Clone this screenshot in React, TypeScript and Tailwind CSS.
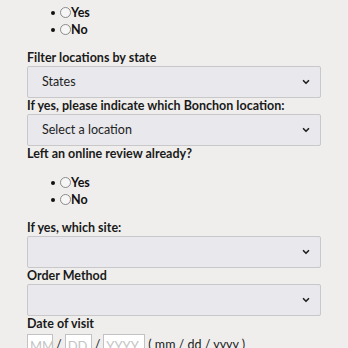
import { ChevronDown } from 'lucide-react';

function Radios() {
  return (
    <ul className="pl-[24px] text-[12.5px] font-bold leading-[17px] text-[#111]">
      {['Yes', 'No'].map((v) => (
        <li key={v} className="flex items-center h-[17px]">
          <span className="w-[4px] h-[4px] rounded-full bg-[#111] mr-[5px]" />
          <span className="w-[11px] h-[11px] rounded-full border border-[#8a8a8a] bg-[#f6f6f6]" />
          <span>{v}</span>
        </li>
      ))}
    </ul>
  );
}

function Select({ value }: { value?: string }) {
  return (
    <div className="h-[32px] w-[294px] flex items-center justify-between rounded-[2px] border border-[#c8c8cb] bg-[#e8e8ed] pl-[14px] pr-[9px] text-[12.5px] text-[#222]">
      <span>{value}</span>
      <ChevronDown className="w-[10px] h-[10px] text-[#222]" strokeWidth={4} />
    </div>
  );
}

function Label({ children }: { children: string }) {
  return <div className="h-[16px] text-[12.5px] font-bold leading-[16px] text-[#1a1a1a] whitespace-nowrap">{children}</div>;
}

export default function App() {
  return (
    <div className="h-[348px] overflow-hidden bg-[#efeeec] pl-[27px] pt-[4px]" style={{ fontFamily: 'Lato, "Open Sans", sans-serif' }}>
      <Radios />
      <div className="mt-[12px]"><Label>Filter locations by state</Label></div>
      <Select value="States" />
      <Label>If yes, please indicate which Bonchon location:</Label>
      <Select value="Select a location" />
      <Label>Left an online review already?</Label>
      <div className="mt-[12px]"><Radios /></div>
      <div className="mt-[12px]"><Label>If yes, which site:</Label></div>
      <Select />
      <Label>Order Method</Label>
      <Select />
      <div className="mb-[2px]"><Label>Date of visit</Label></div>
      <div className="flex items-center text-[12.5px] text-[#222]">
        <div className="w-[26px] h-[22px] border border-[#c2c2c4] bg-white text-[#c4c4c4] text-[13px] pl-[2px] leading-[22px]">MM</div>
        <span className="mx-[3px]">/</span>
        <div className="w-[27px] h-[22px] border border-[#c2c2c4] bg-white text-[#c4c4c4] text-[13px] pl-[2px] leading-[22px]">DD</div>
        <span className="mx-[3px]">/</span>
        <div className="w-[42px] h-[22px] border border-[#c2c2c4] bg-white text-[#c4c4c4] text-[13px] pl-[2px] leading-[22px]">YYYY</div>
        <span className="ml-[3px]">( mm / dd / yyyy )</span>
      </div>
    </div>
  );
}
